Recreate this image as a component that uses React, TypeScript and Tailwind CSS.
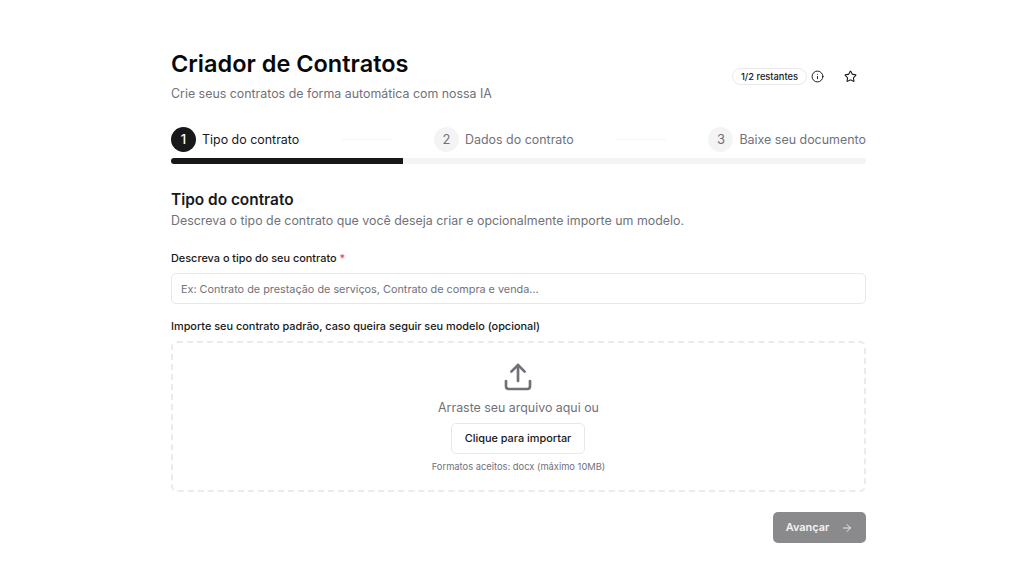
import { Info, Star, ArrowRight } from "lucide-react";

function Step({ n, label, active }: { n: number; label: string; active?: boolean }) {
  return (
    <div className="flex items-center gap-[6px] shrink-0">
      <div className={`w-[25px] h-[25px] rounded-full flex items-center justify-center text-[13px] ${active ? "bg-[#18181b] text-white font-medium" : "bg-[#f4f4f5] text-[#71717a]"}`}>{n}</div>
      <span className={`text-[12.45px] leading-5 ${active ? "text-[#18181b]" : "text-[#71717a]"}`}>{label}</span>
    </div>
  );
}

export default function App() {
  return (
    <div className="w-[1024px] h-[576px] bg-white overflow-hidden font-['Inter',sans-serif] text-[#09090b] flex pl-[171px]">
      <div className="w-[695px] pt-[48px] flex flex-col">
        <div className="flex justify-between items-start">
          <div>
            <h1 className="text-[23.5px] leading-[32px] font-semibold">Criador de Contratos</h1>
            <p className="mt-[4px] text-[12.4px] leading-5 text-[#71717a]">Crie seus contratos de forma automática com nossa IA</p>
          </div>
          <div className="flex items-center mt-[20px] mr-[9px]">
            <span className="h-[17px] px-[8px] rounded-full border border-[#e8e8ea] flex items-center text-[9.3px] font-medium text-[#18181b]">1/2 restantes</span>
            <Info className="ml-[4px] w-[13px] h-[13px] text-[#18181b]" strokeWidth={1.8} />
            <Star className="ml-[20px] w-[13px] h-[13px] text-[#18181b]" strokeWidth={2} />
          </div>
        </div>

        <div className="mt-[23px] flex items-center justify-between h-[25px]">
          <Step n={1} label="Tipo do contrato" active />
          <div className="w-[50px] h-px bg-[#f4f4f5]" />
          <Step n={2} label="Dados do contrato" />
          <div className="w-[50px] h-px bg-[#f4f4f5]" />
          <Step n={3} label="Baixe seu documento" />
        </div>
        <div className="mt-[6px] h-[6px] rounded-full bg-[#f4f4f5] overflow-hidden">
          <div className="h-full w-[232px] bg-[#18181b]" />
        </div>

        <h2 className="mt-[26px] text-[15.4px] leading-[20px] font-semibold text-[#18181b]">Tipo do contrato</h2>
        <p className="mt-[1px] text-[12.4px] leading-5 text-[#71717a]">Descreva o tipo de contrato que você deseja criar e opcionalmente importe um modelo.</p>

        <label className="mt-[19px] text-[10.9px] leading-4 font-[450] text-[#18181b]">
          Descreva o tipo do seu contrato <span className="text-[#ef4444]">*</span>
        </label>
        <div className="mt-[7px] h-[31px] rounded-[5px] border border-[#e8e8ea] pl-[9px] pt-[1px] flex items-center text-[10.85px] text-[#71717a]">
          Ex: Contrato de prestação de serviços, Contrato de compra e venda...
        </div>

        <label className="mt-[14px] text-[10.9px] leading-4 font-[450] text-[#18181b]">Importe seu contrato padrão, caso queira seguir seu modelo (opcional)</label>
        <div className="mt-[7px] h-[151px] rounded-[6px] border-2 border-dashed border-[#ebebed] flex flex-col items-center pt-[18px]">
          <svg className="w-[32px] h-[32px] mr-[2px] text-[#71717a]" viewBox="0 0 24 24" fill="none" stroke="currentColor" strokeWidth={2} strokeLinecap="round" strokeLinejoin="round">
            <path d="M12 3v12" />
            <path d="M7 8l5-5 5 5" />
            <path d="M3 15v4a2 2 0 0 0 2 2h14a2 2 0 0 0 2-2v-4" />
          </svg>
          <p className="mt-[5px] text-[12.4px] leading-5 text-[#71717a]">Arraste seu arquivo aqui ou</p>
          <button className="mt-[5px] h-[31px] w-[134px] mr-[1px] rounded-[5px] border border-[#e8e8ea] bg-white text-[10.9px] font-[450] text-[#18181b]">Clique para importar</button>
          <p className="mt-[5px] text-[9.35px] leading-4 text-[#71717a]">Formatos aceitos: docx (máximo 10MB)</p>
        </div>

        <div className="mt-[20px] flex justify-end">
          <button className="h-[31px] w-[93px] rounded-[5px] bg-[#8a8a8c] text-white/90 text-[10.9px] font-semibold flex items-center justify-center gap-[12px]">
            Avançar <ArrowRight className="w-[12px] h-[12px]" strokeWidth={1.8} />
          </button>
        </div>
      </div>
    </div>
  );
}
